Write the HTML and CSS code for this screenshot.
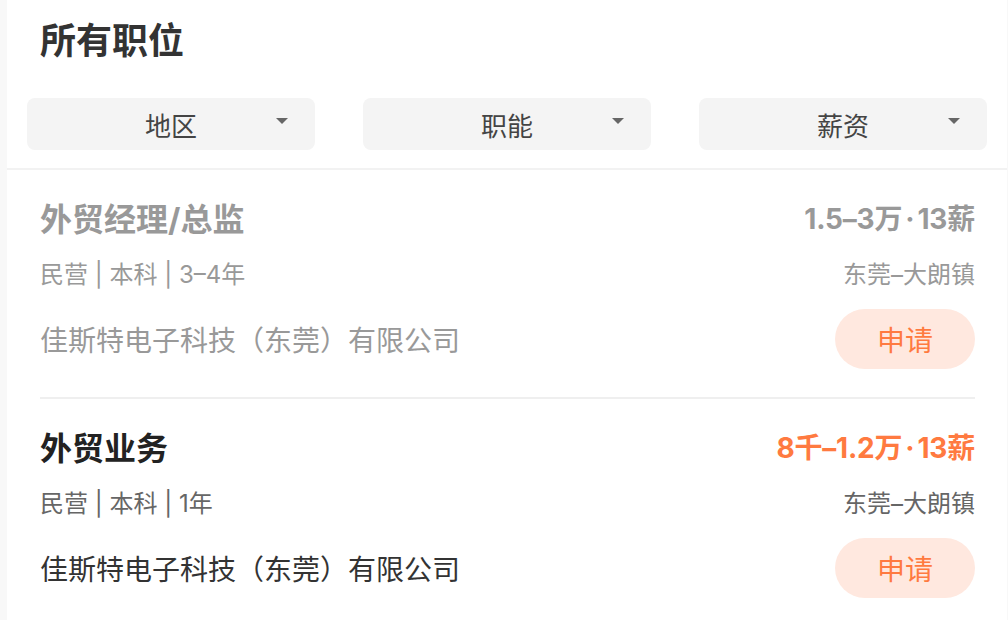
FILE: index.html
```html
<!DOCTYPE html>
<html lang="zh-CN">
<head>
<meta charset="utf-8">
<title>所有职位</title>
<link rel="stylesheet" href="styles.css">
</head>
<body>
<div class="panel">
  <header class="head">
    <h1 class="page-title">所有职位</h1>
    <div class="filters">
      <div class="filter"><span>地区</span><i class="caret"></i></div>
      <div class="filter"><span>职能</span><i class="caret"></i></div>
      <div class="filter"><span>薪资</span><i class="caret"></i></div>
    </div>
  </header>
  <div class="list">
    <div class="job job-viewed">
      <div class="row row-top">
        <div class="job-title">外贸经理/总监</div>
        <div class="salary">1.5–3万<span class="dot">·</span>13薪</div>
      </div>
      <div class="row row-meta">
        <div class="meta">民营 | 本科 | 3–4年</div>
        <div class="loc">东莞–大朗镇</div>
      </div>
      <div class="row row-company">
        <div class="company">佳斯特电子科技（东莞）有限公司</div>
        <button class="apply">申请</button>
      </div>
    </div>
    <div class="job">
      <div class="row row-top">
        <div class="job-title">外贸业务</div>
        <div class="salary">8千–1.2万<span class="dot">·</span>13薪</div>
      </div>
      <div class="row row-meta">
        <div class="meta">民营 | 本科 | 1年</div>
        <div class="loc">东莞–大朗镇</div>
      </div>
      <div class="row row-company">
        <div class="company">佳斯特电子科技（东莞）有限公司</div>
        <button class="apply">申请</button>
      </div>
    </div>
  </div>
</div>
</body>
</html>
```

FILE: styles.css
```css
* { box-sizing: border-box; }
html, body { margin: 0; padding: 0; }
body {
  background: #f8f8f8;
  font-family: "Inter", "Noto Sans CJK SC", sans-serif;
  overflow: hidden;
}
.panel {
  margin-left: 7px;
  width: 1000px;
  min-height: 620px;
  background: #ffffff;
}
.head {
  padding: 19px 20px 18px;
  border-bottom: 2px solid #f2f2f2;
}
.page-title {
  margin: 0 0 0 13px;
  font-size: 36px;
  line-height: 44px;
  font-weight: 700;
  color: #333333;
}
.filters {
  margin-top: 35px;
  display: flex;
  gap: 48px;
}
.filter {
  flex: 1;
  position: relative;
  height: 52px;
  border-radius: 8px;
  background: #f4f4f4;
  display: flex;
  align-items: center;
  justify-content: center;
  font-size: 26px;
  color: #444444;
}
.caret {
  position: absolute;
  right: 27px;
  top: 20px;
  width: 0;
  height: 0;
  border-left: 6px solid transparent;
  border-right: 6px solid transparent;
  border-top: 6px solid #666666;
}
.list {
  padding: 0 32px 0 33px;
}
.job {
  padding: 28px 0;
  border-bottom: 2px solid #efefef;
}
.row {
  display: flex;
  justify-content: space-between;
  align-items: center;
}
.row-top { height: 38px; }
.row-meta { height: 34px; margin-top: 19px; }
.row-company { height: 60px; margin-top: 20px; }
.job-title {
  font-size: 32px;
  font-weight: 700;
  color: #222222;
}
.salary {
  font-size: 28px;
  font-weight: 700;
  color: #ff7a40;
  letter-spacing: -0.2px;
}
.dot {
  margin: 0 3px;
}
.meta, .loc {
  font-size: 24px;
  color: #666666;
}
.company {
  font-size: 28px;
  color: #333333;
}
.apply {
  width: 140px;
  height: 60px;
  border: 0;
  border-radius: 30px;
  background: #ffe8df;
  color: #ff7a40;
  font-family: inherit;
  font-size: 28px;
  padding: 0;
}
.job-viewed .job-title,
.job-viewed .salary,
.job-viewed .meta,
.job-viewed .loc,
.job-viewed .company {
  color: #999999;
}
```
